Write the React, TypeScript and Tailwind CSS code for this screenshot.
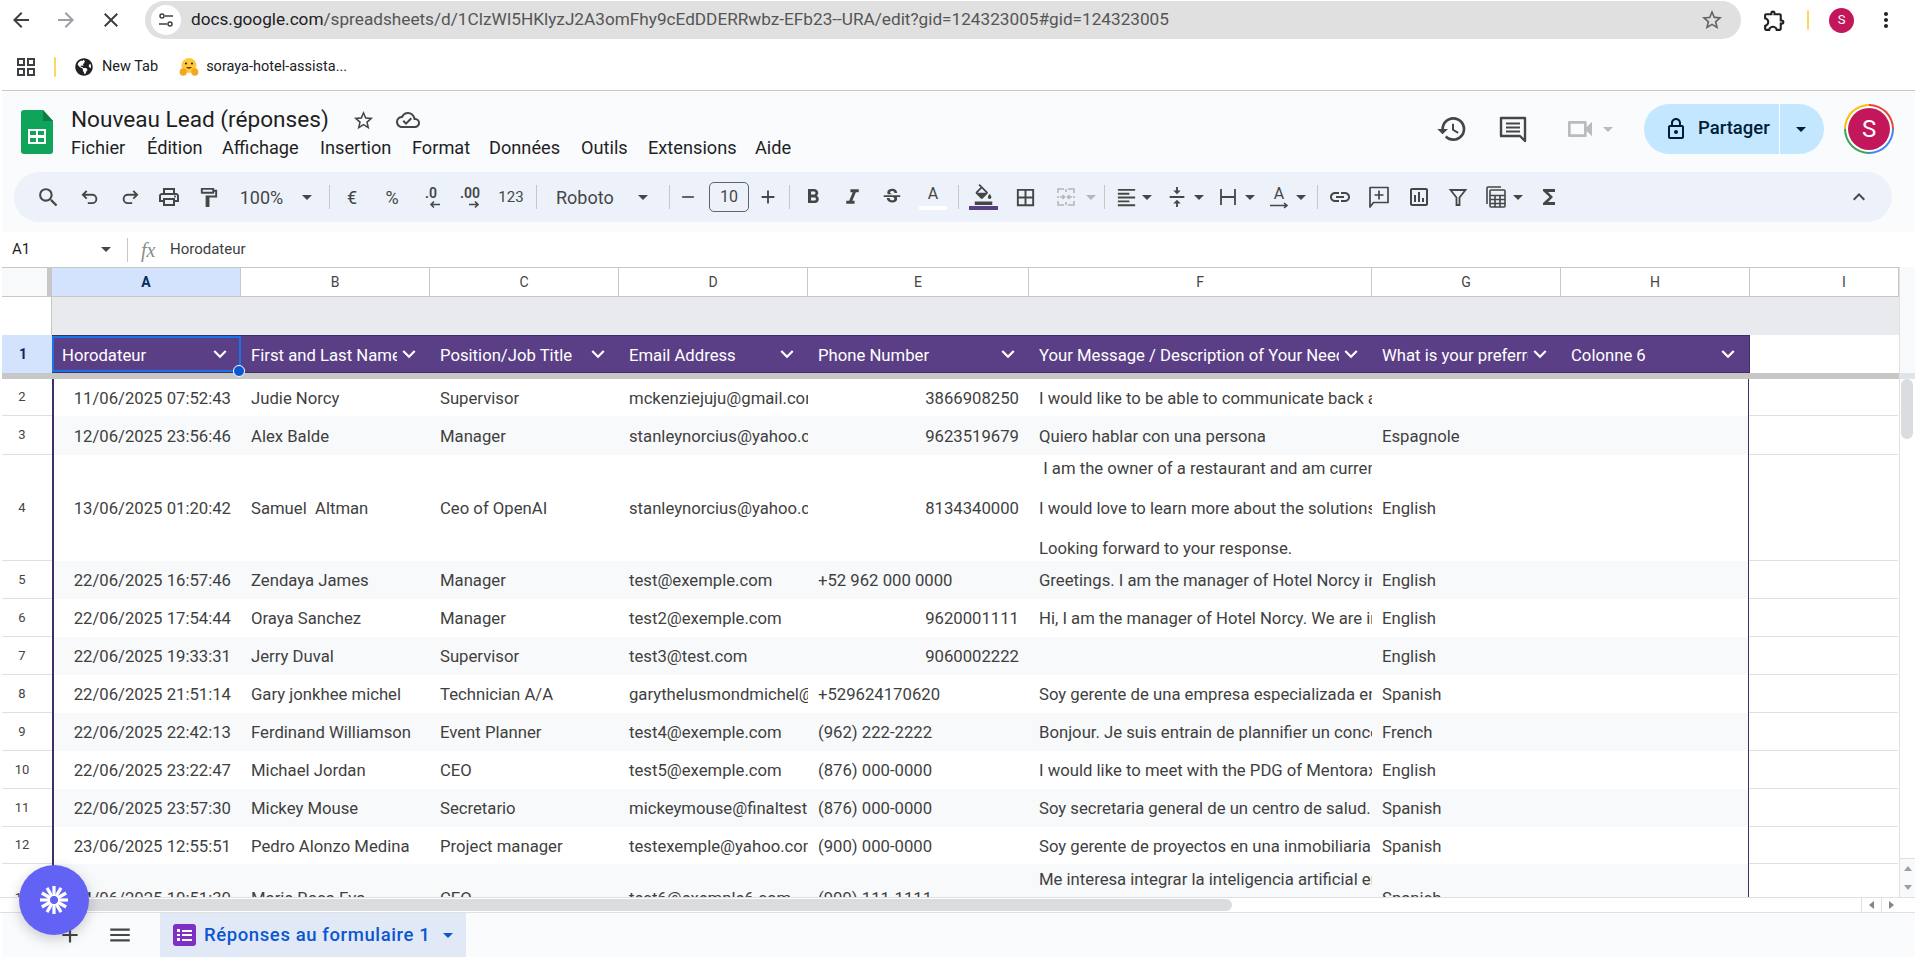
import type { ReactNode } from "react";
import {
    MdArrowBack,
    MdArrowForward,
    MdBorderAll,
    MdClose,
    MdFormatAlignLeft,
    MdFormatBold,
    MdFormatItalic,
    MdFunctions,
    MdHistory,
    MdKeyboardArrowDown,
    MdKeyboardArrowUp,
    MdLink,
    MdMenu,
    MdMoreVert,
    MdOutlineExtension,
    MdOutlineFormatColorFill,
    MdOutlineFormatPaint,
    MdOutlineInsertChart,
    MdOutlineLock,
    MdOutlinePrint,
    MdOutlineStarBorder,
    MdOutlineVideocam,
    MdSearch,
    MdStarBorder,
    MdStrikethroughS,
    MdVerticalAlignCenter,
    MdOutlineCloudDone,
    MdAdd,
    MdRemove,
} from "react-icons/md";
import { FaGlobeAmericas } from "react-icons/fa";

interface RowData {
    num: number;
    height: string;
    band: boolean;
    cells: string[];
    rightPhone?: boolean;
}

const rows: RowData[] = [
    { num: 2, height: "h-[37px]", band: false, rightPhone: true, cells: ["11/06/2025 07:52:43", "Judie Norcy", "Supervisor", "mckenziejuju@gmail.com", "3866908250", "I would like to be able to communicate back and forth", ""] },
    { num: 3, height: "h-[39px]", band: true, rightPhone: true, cells: ["12/06/2025 23:56:46", "Alex Balde", "Manager", "stanleynorcius@yahoo.com", "9623519679", "Quiero hablar con una persona", "Espagnole"] },
    { num: 4, height: "h-[106px]", band: false, rightPhone: true, cells: ["13/06/2025 01:20:42", "Samuel  Altman", "Ceo of OpenAI", "stanleynorcius@yahoo.com", "8134340000", "", "English"] },
    { num: 5, height: "h-[38px]", band: true, cells: ["22/06/2025 16:57:46", "Zendaya James", "Manager", "test@exemple.com", "+52 962 000 0000", "Greetings. I am the manager of Hotel Norcy in Mexico", "English"] },
    { num: 6, height: "h-[38px]", band: false, rightPhone: true, cells: ["22/06/2025 17:54:44", "Oraya Sanchez", "Manager", "test2@exemple.com", "9620001111", "Hi, I am the manager of Hotel Norcy. We are in Mexico", "English"] },
    { num: 7, height: "h-[38px]", band: true, rightPhone: true, cells: ["22/06/2025 19:33:31", "Jerry Duval", "Supervisor", "test3@test.com", "9060002222", "", "English"] },
    { num: 8, height: "h-[38px]", band: false, cells: ["22/06/2025 21:51:14", "Gary jonkhee michel", "Technician A/A", "garythelusmondmichel@gmail.com", "+529624170620", "Soy gerente de una empresa especializada en", "Spanish"] },
    { num: 9, height: "h-[38px]", band: true, cells: ["22/06/2025 22:42:13", "Ferdinand Williamson", "Event Planner", "test4@exemple.com", "(962) 222-2222", "Bonjour. Je suis entrain de plannifier un concert", "French"] },
    { num: 10, height: "h-[38px]", band: false, cells: ["22/06/2025 23:22:47", "Michael Jordan", "CEO", "test5@exemple.com", "(876) 000-0000", "I would like to meet with the PDG of Mentorax", "English"] },
    { num: 11, height: "h-[38px]", band: true, cells: ["22/06/2025 23:57:30", "Mickey Mouse", "Secretario", "mickeymouse@finaltest.com", "(876) 000-0000", "Soy secretaria general de un centro de salud.", "Spanish"] },
    { num: 12, height: "h-[37px]", band: false, cells: ["23/06/2025 12:55:51", "Pedro Alonzo Medina", "Project manager", "testexemple@yahoo.com", "(900) 000-0000", "Soy gerente de proyectos en una inmobiliaria.", "Spanish"] },
    { num: 13, height: "h-[68px]", band: true, cells: ["24/06/2025 10:51:30", "Marie Rosa Eva", "CEO", "test6@exemple6.com", "(909) 111-1111", "", "Spanish"] },
];

const columns = [
    { letter: "B", width: "w-[189px] justify-center" },
    { letter: "C", width: "w-[189px] justify-center" },
    { letter: "D", width: "w-[189px] justify-center" },
    { letter: "E", width: "w-[221px] justify-center" },
    { letter: "F", width: "w-[343px] justify-center" },
    { letter: "G", width: "w-[189px] justify-center" },
    { letter: "H", width: "w-[189px] justify-center" },
    { letter: "I", width: "w-[149px] pl-[92px]" },
];

const headers = [
    { label: "First and Last Name", width: "w-[189px]" },
    { label: "Position/Job Title", width: "w-[189px]" },
    { label: "Email Address", width: "w-[189px]" },
    { label: "Phone Number", width: "w-[221px]" },
    { label: "Your Message / Description of Your Needs", width: "w-[343px]" },
    { label: "What is your preferred language", width: "w-[189px]" },
    { label: "Colonne 6", width: "w-[188px]" },
];

const menus = [
    { label: "Fichier", width: "w-[76px]" },
    { label: "Édition", width: "w-[75px]" },
    { label: "Affichage", width: "w-[98px]" },
    { label: "Insertion", width: "w-[92px]" },
    { label: "Format", width: "w-[77px]" },
    { label: "Données", width: "w-[92px]" },
    { label: "Outils", width: "w-[67px]" },
    { label: "Extensions", width: "w-[107px]" },
    { label: "Aide", width: "w-[50px]" },
];

function Caret({ color = "#444746" }: { color?: string }) {
    return (
        <svg width="10" height="5" viewBox="0 0 10 5" className="shrink-0">
            <path d="M0 0h10L5 5z" fill={color} />
        </svg>
    );
}

function Tool({ className, children }: { className: string; children?: ReactNode }) {
    return <div className={`flex h-full shrink-0 items-center justify-center ${className}`}>{children}</div>;
}

function Sep({ className = "" }: { className?: string }) {
    return <div className={`h-[24px] w-px shrink-0 bg-[#c7c7c7] ${className}`} />;
}

function Cell({ width, right, clipTop, children }: { width: string; right?: boolean; clipTop?: boolean; children?: ReactNode }) {
    const align = clipTop ? "items-start pt-[3px]" : "items-center pt-[2px]";
    return (
        <div className={`flex h-full shrink-0 overflow-hidden px-[10px] ${width} ${align} ${right ? "justify-end" : ""}`}>
            <span className="shrink-0 whitespace-pre">{children}</span>
        </div>
    );
}

function HeaderCell({ label, width }: { label: string; width: string }) {
    return (
        <div className={`flex h-full shrink-0 items-center pl-[10px] pr-[8px] ${width}`}>
            <div className="min-w-0 flex-1 overflow-hidden pt-[3px] whitespace-nowrap">{label}</div>
            <MdKeyboardArrowDown size={26} className="-ml-px shrink-0" />
        </div>
    );
}

function SheetRow({ row }: { row: RowData }) {
    const bg = row.band ? "bg-[#f8f9fa]" : "bg-white";

    return (
        <div className={`flex shrink-0 ${row.height}`}>
            <div className="flex h-full w-[50px] shrink-0 items-center justify-center border-b border-[#e0e0e0] pr-[10px] text-[13px] text-[#444]">
                {row.num}
            </div>
            <div className={`flex h-full shrink-0 border-r-2 border-l-2 border-[#3f3168] ${bg} -mr-px`}>
                <div className="-ml-[2px] flex h-full w-[189px] shrink-0 items-center justify-end pt-[2px] pr-[10px]">
                    <span className="whitespace-pre">{row.cells[0]}</span>
                </div>
                <Cell width="w-[189px]">{row.cells[1]}</Cell>
                <Cell width="w-[189px]">{row.cells[2]}</Cell>
                <Cell width="w-[189px]">{row.cells[3]}</Cell>
                <Cell width="w-[221px]" right={row.rightPhone}>{row.cells[4]}</Cell>
                {row.num === 4 ? (
                    <div className="flex h-full w-[343px] shrink-0 flex-col justify-center overflow-hidden px-[10px] pt-[1px] leading-[40px] whitespace-pre">
                        <div> I am the owner of a restaurant and am currently looking</div>
                        <div>I would love to learn more about the solutions you offer</div>
                        <div>Looking forward to your response.</div>
                    </div>
                ) : row.num === 13 ? (
                    <Cell width="w-[343px]" clipTop>Me interesa integrar la inteligencia artificial en mi</Cell>
                ) : (
                    <Cell width="w-[343px]">{row.cells[5]}</Cell>
                )}
                <Cell width="w-[189px]">{row.cells[6]}</Cell>
                <div className="h-full w-[187px] shrink-0" />
            </div>
            <div className="h-full w-[149px] shrink-0 border-b border-[#e0e0e0] bg-white" />
        </div>
    );
}

function AppsIcon() {
    return (
        <svg width="18" height="18" viewBox="0 0 18 18" fill="none" stroke="#3c4043" strokeWidth="2">
            <rect x="1" y="1" width="6" height="6" />
            <rect x="11" y="1" width="6" height="6" />
            <rect x="1" y="11" width="6" height="6" />
            <rect x="11" y="11" width="6" height="6" />
        </svg>
    );
}

function HuggingFace() {
    return (
        <svg width="20" height="20" viewBox="0 0 20 20">
            <circle cx="10" cy="8.5" r="7.5" fill="#ffc83d" />
            <circle cx="7" cy="6.5" r="1.1" fill="#3a2a10" />
            <circle cx="13" cy="6.5" r="1.1" fill="#3a2a10" />
            <path d="M7 10c1.5 2.4 4.5 2.4 6 0z" fill="#7a3b12" />
            <ellipse cx="4.2" cy="15" rx="3.6" ry="3.8" fill="#f5a623" />
            <ellipse cx="15.8" cy="15" rx="3.6" ry="3.8" fill="#f5a623" />
        </svg>
    );
}

function SheetsLogo() {
    return (
        <svg width="32" height="44" viewBox="0 0 32 44">
            <path d="M3 0h19l10 11v30a3 3 0 0 1-3 3H3a3 3 0 0 1-3-3V3a3 3 0 0 1 3-3z" fill="#10a35a" />
            <path d="M22 0l10 11H22z" fill="#0b7f43" />
            <path d="M7 19h18v15H7z" fill="#fff" />
            <path d="M9 21h6v4H9zM17 21h6v4h-6zM9 28h6v4H9zM17 28h6v4h-6z" fill="#10a35a" />
        </svg>
    );
}

function SiteTune() {
    return (
        <svg width="16" height="16" viewBox="0 0 16 16" fill="none" stroke="#3c4043" strokeWidth="1.5">
            <circle cx="4" cy="4" r="2" />
            <path d="M7 4h8" />
            <circle cx="12" cy="12" r="2" />
            <path d="M1 12h8" />
        </svg>
    );
}

function UndoIcon({ flip }: { flip?: boolean }) {
    return (
        <svg width="22" height="22" viewBox="0 0 20 20" fill="none" stroke="#444746" strokeWidth="1.7" className={flip ? "-scale-x-100" : ""}>
            <path d="M7 4.5 3.5 8 7 11.5M3.5 8H12a3.8 3.8 0 0 1 0 7.6H8" />
        </svg>
    );
}

function DecimalIcon({ label, right }: { label: string; right?: boolean }) {
    return (
        <div className="flex flex-col items-center text-[14px] leading-[14px] font-semibold text-[#444746]">
            <span>{label}</span>
            <svg width="12" height="9" viewBox="0 0 12 9" fill="none" stroke="#444746" strokeWidth="1.6" className={right ? "ml-[8px]" : "ml-[8px] -scale-x-100"}>
                <path d="M1 4.5h9M7 1.5l3 3-3 3" />
            </svg>
        </div>
    );
}

function MergeIcon() {
    return (
        <svg width="20" height="20" viewBox="0 0 20 20" fill="none" stroke="#b4b6b8" strokeWidth="1.6">
            <path d="M2 6V2h6M12 2h6v4M2 14v4h6M12 18h6v-4M2 9v2M18 9v2M10 2v3M10 15v3" />
            <path d="M4 10h4M16 10h-4M6.5 8 8.5 10 6.5 12M13.5 8 11.5 10 13.5 12" />
        </svg>
    );
}

function ClipIcon() {
    return (
        <svg width="20" height="20" viewBox="0 0 20 20" fill="none" stroke="#444746" strokeWidth="1.8">
            <path d="M3 2v16M17 2v16M3 10h14" />
        </svg>
    );
}

function FilterIcon() {
    return (
        <svg width="20" height="20" viewBox="0 0 20 20" fill="none" stroke="#444746" strokeWidth="1.8">
            <path d="M2.5 3h15L11.5 10.5V18h-3v-7.5z" />
        </svg>
    );
}

function FunctionsTableIcon() {
    return (
        <svg width="22" height="24" viewBox="0 0 22 24" fill="none" stroke="#444746" strokeWidth="1.6">
            <path d="M3 19V3a1 1 0 0 1 1-1h13" />
            <rect x="6" y="5" width="15" height="17" rx="1" />
            <path d="M6 10.5h15M6 14.5h15M6 18.5h15M11 10.5V22M16 10.5V22" />
        </svg>
    );
}

function AddCommentIcon() {
    return (
        <svg width="22" height="24" viewBox="0 0 22 24" fill="none" stroke="#444746" strokeWidth="1.7">
            <path d="M2 2.5h18v15H5.5L2 22z" strokeLinejoin="round" />
            <path d="M11 5.5v9M6.5 10h9" />
        </svg>
    );
}

function CommentLinesIcon() {
    return (
        <svg width="28" height="28" viewBox="0 0 28 28" fill="none" stroke="#444746" strokeWidth="2.4">
            <path d="M2 3h24v23l-5-5H2z" strokeLinejoin="round" />
            <path d="M7 8.5h14M7 12.5h14M7 16.5h14" strokeWidth="2" />
        </svg>
    );
}

function TextRotateIcon() {
    return (
        <div className="flex flex-col items-center">
            <span className="text-[16px] leading-[16px]">A</span>
            <svg width="20" height="7" viewBox="0 0 20 7" fill="none" stroke="#444746" strokeWidth="1.6">
                <path d="M1 3.5h17M15 1l3 2.5L15 6" />
            </svg>
        </div>
    );
}

function FormIcon() {
    return (
        <div className="flex h-[22px] w-[23px] shrink-0 flex-col items-center justify-center gap-[2px] rounded-[3px] bg-[#7e2fc4]">
            <div className="flex items-center gap-[2px]"><span className="h-[2.5px] w-[2.5px] bg-white" /><span className="h-[2px] w-[10px] bg-white" /></div>
            <div className="flex items-center gap-[2px]"><span className="h-[2.5px] w-[2.5px] bg-white" /><span className="h-[2px] w-[10px] bg-white" /></div>
            <div className="flex items-center gap-[2px]"><span className="h-[2.5px] w-[2.5px] bg-white" /><span className="h-[2px] w-[10px] bg-white" /></div>
        </div>
    );
}

function FloatingIcon() {
    const spokes = Array.from({ length: 12 }, (_, i) => i * 30);
    return (
        <svg width="30" height="30" viewBox="0 0 30 30" stroke="#fff" strokeWidth="3.2">
            {spokes.map((deg) => (
                <path key={deg} d="M15 11V1" transform={`rotate(${deg} 15 15)`} />
            ))}
            <circle cx="15" cy="15" r="3.6" fill="#6262f5" stroke="none" />
        </svg>
    );
}

function Toolbar() {
    const icon = "#444746";
    return (
        <div className="ml-[12px] flex h-[50px] w-[1878px] shrink-0 items-center rounded-[25px] bg-[#edf2fa] pl-[14px] pr-[18px] text-[#444746]">
            <Tool className="w-[40px]"><MdSearch size={25} color={icon} /></Tool>
            <Tool className="w-[44px]"><UndoIcon /></Tool>
            <Tool className="w-[36px]"><UndoIcon flip /></Tool>
            <Tool className="w-[42px]"><MdOutlinePrint size={24} color={icon} /></Tool>
            <Tool className="w-[36px]"><MdOutlineFormatPaint size={23} color={icon} /></Tool>
            <Tool className="w-[71px] text-[18px]">100%</Tool>
            <Tool className="w-[20px]"><Caret /></Tool>
            <Sep className="ml-[12px]" />
            <Tool className="w-[44px] text-[18px]">€</Tool>
            <Tool className="w-[36px] text-[18px]">%</Tool>
            <Tool className="w-[42px]"><DecimalIcon label=".0" /></Tool>
            <Tool className="w-[36px]"><DecimalIcon label=".00" right /></Tool>
            <Tool className="w-[46px] text-[15px]">123</Tool>
            <Sep className="ml-[2px]" />
            <div className="ml-[19px] w-[77px] shrink-0 text-[18px]">Roboto</div>
            <Tool className="w-[20px]"><Caret /></Tool>
            <Sep className="ml-[16px]" />
            <Tool className="w-[36px]"><MdRemove size={20} color={icon} /></Tool>
            <div className="ml-[3px] flex h-[30px] w-[40px] shrink-0 items-center justify-center rounded-[5px] border border-[#5f6368] text-[16px]">10</div>
            <Tool className="w-[38px]"><MdAdd size={22} color={icon} /></Tool>
            <Sep className="ml-[2px]" />
            <Tool className="w-[46px]"><MdFormatBold size={24} color={icon} /></Tool>
            <Tool className="w-[32px]"><MdFormatItalic size={25} color={icon} /></Tool>
            <Tool className="w-[48px]"><MdStrikethroughS size={22} color={icon} /></Tool>
            <Tool className="w-[34px]">
                <div className="flex flex-col items-center">
                    <span className="text-[16px] leading-[18px]">A</span>
                    <span className="mt-[3px] h-[4px] w-[28px] bg-white" />
                </div>
            </Tool>
            <Sep className="ml-[8px]" />
            <Tool className="w-[48px]">
                <div className="flex flex-col items-center">
                    <MdOutlineFormatColorFill size={21} color={icon} />
                    <span className="mt-[1px] h-[4px] w-[29px] bg-[#5b3f86]" />
                </div>
            </Tool>
            <Tool className="w-[36px]"><MdBorderAll size={23} color={icon} /></Tool>
            <Tool className="ml-[4px] w-[38px]"><MergeIcon /></Tool>
            <Tool className="w-[12px]"><Caret color="#b4b6b8" /></Tool>
            <Sep className="ml-[7px]" />
            <Tool className="ml-[7px] w-[28px]"><MdFormatAlignLeft size={23} color={icon} /></Tool>
            <Tool className="w-[14px]"><Caret /></Tool>
            <Tool className="ml-[8px] w-[30px]"><MdVerticalAlignCenter size={22} color={icon} /></Tool>
            <Tool className="w-[14px]"><Caret /></Tool>
            <Tool className="ml-[8px] w-[28px]"><ClipIcon /></Tool>
            <Tool className="ml-px w-[14px]"><Caret /></Tool>
            <Tool className="ml-[8px] w-[28px]"><TextRotateIcon /></Tool>
            <Tool className="ml-px w-[14px]"><Caret /></Tool>
            <Sep className="ml-[9px]" />
            <Tool className="w-[44px]"><MdLink size={24} color={icon} /></Tool>
            <Tool className="w-[34px]"><AddCommentIcon /></Tool>
            <Tool className="w-[46px]"><MdOutlineInsertChart size={24} color={icon} /></Tool>
            <Tool className="w-[32px]"><FilterIcon /></Tool>
            <Tool className="ml-[4px] w-[34px]"><FunctionsTableIcon /></Tool>
            <Tool className="w-[12px]"><Caret /></Tool>
            <Tool className="w-[50px]"><MdFunctions size={24} color={icon} /></Tool>
            <Tool className="ml-auto w-[30px]"><MdKeyboardArrowUp size={24} color={icon} /></Tool>
        </div>
    );
}

export default function App() {
    return (
        <div
            className="flex h-[959px] w-[1915px] flex-col overflow-hidden bg-white text-[#3c4043]"
            style={{ fontFamily: "Roboto, sans-serif" }}
        >
            {/* browser chrome */}
            <div className="mb-[4px] flex h-[40px] shrink-0 items-center">
                <div className="flex w-[145px] shrink-0 items-center pl-[9px] text-[#3c4043]">
                    <MdArrowBack size={24} />
                    <MdArrowForward size={24} color="#9aa0a6" className="ml-[21px]" />
                    <MdClose size={24} className="ml-[21px]" />
                </div>
                <div className="flex h-[38px] w-[1596px] shrink-0 items-center rounded-[19px] bg-[#e0e0e0] pl-[6px] pr-[17px]">
                    <div className="flex h-[30px] w-[30px] shrink-0 items-center justify-center rounded-full bg-white">
                        <SiteTune />
                    </div>
                    <div className="ml-[10px] text-[17.2px] whitespace-nowrap text-[#555]">
                        <span className="text-[#202124]">docs.google.com</span>/spreadsheets/d/1ClzWI5HKlyzJ2A3omFhy9cEdDDERRwbz-EFb23--URA/edit?gid=124323005#gid=124323005
                    </div>
                    <MdStarBorder size={24} color="#5f6368" className="ml-auto" />
                </div>
                <MdOutlineExtension size={25} color="#202124" className="ml-[21px]" />
                <div className="ml-[20px] h-[20px] w-[2px] rounded bg-[#fdd663]" />
                <div className="ml-[20px] flex h-[25px] w-[25px] items-center justify-center rounded-full bg-[#c2185b] text-[13px] text-white">S</div>
                <MdMoreVert size={24} color="#202124" className="ml-[20px]" />
            </div>
            <div className="flex h-[46px] shrink-0 items-center pl-[17px] text-[14.5px] text-[#202124]">
                <AppsIcon />
                <div className="ml-[19px] h-[20px] w-[2px] rounded bg-[#fdd663]" />
                <FaGlobeAmericas size={18} className="ml-[19px]" />
                <span className="ml-[9px]">New Tab</span>
                <div className="ml-[21px]"><HuggingFace /></div>
                <span className="ml-[7px]">soraya-hotel-assista...</span>
            </div>

            {/* sheets header */}
            <div className="ml-[2px] h-[142px] shrink-0 border-t border-[#c7c7c7] bg-[#f9fbfd]">
                <div className="flex h-[81px]">
                    <div className="ml-[19px] mt-[19px] shrink-0"><SheetsLogo /></div>
                    <div className="ml-[18px] pt-[14px]">
                        <div className="flex h-[30px] items-center text-[22.6px] text-[#1f1f1f]">
                            <span>Nouveau Lead (réponses)</span>
                            <MdOutlineStarBorder size={23} color="#444746" className="ml-[23px]" />
                            <MdOutlineCloudDone size={24} color="#444746" className="ml-[21px]" />
                        </div>
                        <div className="flex h-[26px] items-center text-[18.2px] text-[#1f1f1f]">
                            {menus.map((menu) => (
                                <div key={menu.label} className={menu.width}>{menu.label}</div>
                            ))}
                        </div>
                    </div>
                    <div className="ml-auto mt-[13px] flex h-[50px] items-center pr-[21px]">
                        <MdHistory size={32} color="#444746" />
                        <div className="ml-[31px]"><CommentLinesIcon /></div>
                        <MdOutlineVideocam size={32} color="#b9bbbd" className="ml-[37px]" />
                        <div className="ml-[7px]"><Caret color="#b9bbbd" /></div>
                        <div className="ml-[31px] flex h-[50px] w-[180px] items-center rounded-[25px] bg-[#c2e7ff] text-[18.5px] text-[#001d35]">
                            <MdOutlineLock size={24} className="ml-[20px]" />
                            <span className="ml-[10px] font-medium">Partager</span>
                            <div className="ml-[9px] h-full w-px bg-white" />
                            <div className="flex flex-1 items-center justify-center pr-[2px]"><Caret color="#001d35" /></div>
                        </div>
                        <div className="ml-[20px] rounded-full bg-[conic-gradient(#ea4335_0_25%,#4285f4_25%_50%,#34a853_50%_75%,#fbbc04_75%)] p-[2px]">
                            <div className="rounded-full bg-white p-[2px]">
                                <div className="flex h-[42px] w-[42px] items-center justify-center rounded-full bg-[#c2185b] text-[24px] text-white">S</div>
                            </div>
                        </div>
                    </div>
                </div>
                <Toolbar />
            </div>

            {/* formula bar */}
            <div className="flex h-[35px] shrink-0 items-center bg-white pl-[12px] text-[15px] text-[#1f1f1f]">
                <span className="w-[89px]">A1</span>
                <Caret />
                <div className="ml-[16px] h-[24px] w-px bg-[#c7c7c7]" />
                <span className="ml-[13px] w-[29px] text-[20px] text-[#8a8d90] italic" style={{ fontFamily: "'Liberation Serif', serif" }}>fx</span>
                <span className="text-[#3c4043]">Horodateur</span>
            </div>

            {/* grid */}
            <div className="flex h-[630px] shrink-0 overflow-hidden pl-[2px] text-[16.7px] text-[#3f3f3f]">
                <div className="flex w-[1897px] shrink-0 flex-col overflow-hidden">
                    <div className="flex h-[30px] shrink-0 border-y border-[#c7c7c7] text-[14px] text-[#444]">
                        <div className="h-full w-[45px] shrink-0 bg-[#f8f9fa]" />
                        <div className="h-full w-[5px] shrink-0 bg-[#c7c7c7]" />
                        <div className="flex h-full w-[189px] shrink-0 items-center justify-center border-r border-[#c7c7c7] bg-[#d3e3fd] font-bold text-[#0b2a5b]">A</div>
                        {columns.map((column) => (
                            <div key={column.letter} className={`flex h-full shrink-0 items-center border-r border-[#c7c7c7] ${column.width}`}>
                                {column.letter}
                            </div>
                        ))}
                    </div>
                    <div className="flex h-[38px] shrink-0">
                        <div className="h-full w-[50px] shrink-0 border-r border-[#c7c7c7] bg-white" />
                        <div className="h-full flex-1 bg-[#e8eaed]" />
                    </div>
                    <div className="flex h-[38px] shrink-0">
                        <div className="flex h-full w-[50px] shrink-0 items-center justify-center bg-[#d3e3fd] pr-[8px] text-[14px] font-bold text-[#0b2a5b]">1</div>
                        <div className="flex h-full shrink-0 border-y border-r border-[#3f3168] bg-[#5b3f86] text-white">
                            <div className="relative z-10 flex h-full w-[189px] shrink-0 items-center border-2 border-[#1a73e8] pl-[8px] pr-[6px]">
                                <div className="flex-1 pt-[3px]">Horodateur</div>
                                <MdKeyboardArrowDown size={26} />
                                <div className="absolute -right-[6px] -bottom-[7px] h-[12px] w-[12px] rounded-full border border-white bg-[#0b57d0]" />
                            </div>
                            {headers.map((header) => (
                                <HeaderCell key={header.label} label={header.label} width={header.width} />
                            ))}
                        </div>
                        <div className="h-full flex-1 bg-white" />
                    </div>
                    <div className="h-[6px] shrink-0 bg-[#c7c7c7]" />
                    {rows.map((row) => (
                        <SheetRow key={row.num} row={row} />
                    ))}
                </div>
                <div className="flex w-[16px] shrink-0 flex-col border-l border-[#e0e0e0] bg-white">
                    <div className="h-[106px] shrink-0 bg-[#f8f9fa]" />
                    <div className="h-[6px] shrink-0 bg-[#dfe3ea]" />
                    <div className="ml-[1px] h-[60px] w-[12px] shrink-0 rounded-[6px] bg-[#dadce0]" />
                    <div className="mt-auto flex h-[39px] shrink-0 flex-col items-center justify-center gap-[14px] border-t border-[#e0e0e0] bg-[#f8f9fa]">
                        <svg width="8" height="5" viewBox="0 0 8 5"><path d="M0 5h8L4 0z" fill="#9aa0a6" /></svg>
                        <svg width="8" height="5" viewBox="0 0 8 5"><path d="M0 0h8L4 5z" fill="#9aa0a6" /></svg>
                    </div>
                </div>
            </div>

            {/* horizontal scrollbar */}
            <div className="flex h-[16px] shrink-0 items-center border-y border-[#e0e0e0] bg-white">
                <div className="ml-[60px] h-[12px] w-[1172px] rounded-[6px] bg-[#dadce0]" />
                <div className="ml-auto flex h-full items-center pr-[14px]">
                    <div className="flex h-full w-[20px] items-center justify-center border-l border-[#e0e0e0]">
                        <svg width="5" height="8" viewBox="0 0 5 8"><path d="M5 0v8L0 4z" fill="#80868b" /></svg>
                    </div>
                    <div className="flex h-full w-[20px] items-center justify-center border-l border-[#e0e0e0]">
                        <svg width="5" height="8" viewBox="0 0 5 8"><path d="M0 0v8l5-4z" fill="#80868b" /></svg>
                    </div>
                </div>
            </div>

            {/* sheet tabs */}
            <div className="ml-[2px] flex h-[44px] shrink-0 items-center bg-[#f9fbfd]">
                <MdAdd size={26} color="#444746" className="ml-[55px]" />
                <MdMenu size={26} color="#444746" className="ml-[24px]" />
                <div className="ml-[27px] flex h-full w-[306px] items-center bg-[#e1e9f7] pl-[13px] text-[18.5px] font-medium tracking-[0.6px] text-[#0b57d0]">
                    <FormIcon />
                    <span className="ml-[8px] pt-[2px] whitespace-nowrap">Réponses au formulaire 1</span>
                    <div className="ml-[13px]"><Caret color="#0b57d0" /></div>
                </div>
            </div>

            {/* floating button */}
            <div className="absolute top-[865px] left-[19px] z-20 flex h-[70px] w-[70px] items-center justify-center rounded-full bg-[#6262f5] shadow-[0_4px_14px_rgba(0,0,0,0.2)]">
                <FloatingIcon />
            </div>
        </div>
    );
}
